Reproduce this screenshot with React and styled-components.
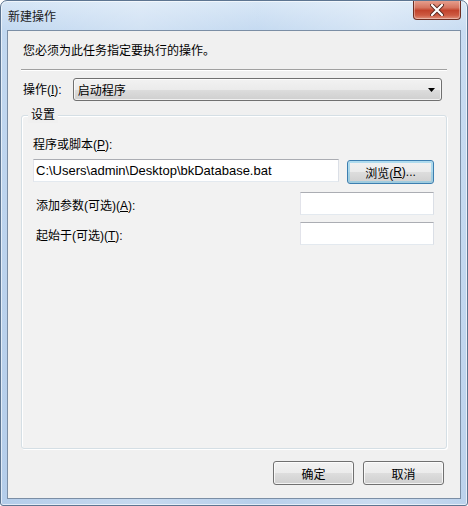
import React from "react";
import styled, { createGlobalStyle } from "styled-components";

const Global = createGlobalStyle`
    html, body {
        margin: 0;
        padding: 0;
        background: #fff;
    }
    body {
        font-family: "Noto Sans CJK SC", "Liberation Sans", sans-serif;
        font-size: 12px;
        color: #000;
    }
`;

const font = `"Liberation Sans", "Noto Sans CJK SC", sans-serif`;

export default function App() {
    return (
        <>
            <Global />
            <Window>
                <TitleBar>
                    <Title>新建操作</Title>
                    <CloseButton aria-label="关闭">
                        <svg width="14" height="12" viewBox="0 0 14 12">
                            <path d="M2 1 L12 11 M12 1 L2 11" stroke="#5a2a22" strokeWidth="4" strokeLinecap="round" />
                            <path d="M2 1 L12 11 M12 1 L2 11" stroke="#fff" strokeWidth="2.2" strokeLinecap="round" />
                        </svg>
                    </CloseButton>
                </TitleBar>
                <Client>
                    <Intro>您必须为此任务指定要执行的操作。</Intro>
                    <Separator />
                    <ActionRow>
                        <Label>操作(<u>I</u>):</Label>
                        <Combo>
                            <span>启动程序</span>
                            <svg width="7" height="4" viewBox="0 0 7 4">
                                <path d="M0 0 H7 L3.5 4 Z" fill="#000" />
                            </svg>
                        </Combo>
                    </ActionRow>
                    <Group>
                        <Legend>设置</Legend>
                        <GroupBody>
                            <Label>程序或脚本(<u>P</u>):</Label>
                            <ScriptRow>
                                <TextBox $width="306px">C:\Users\admin\Desktop\bkDatabase.bat</TextBox>
                                <Button $focused $width="87px">浏览(<u>R</u>)...</Button>
                            </ScriptRow>
                            <FieldRow>
                                <Label>添加参数(可选)(<u>A</u>):</Label>
                                <TextBox $width="134px" />
                            </FieldRow>
                            <FieldRow $gap="7px">
                                <Label>起始于(可选)(<u>T</u>):</Label>
                                <TextBox $width="134px" />
                            </FieldRow>
                        </GroupBody>
                    </Group>
                    <Footer>
                        <Button $width="81px">确定</Button>
                        <Button $width="81px">取消</Button>
                    </Footer>
                </Client>
            </Window>
        </>
    );
}

const Window = styled.div`
    width: 468px;
    height: 506px;
    box-sizing: border-box;
    display: flex;
    flex-direction: column;
    border: 1px solid #5d7591;
    border-radius: 7px 7px 3px 3px;
    background:
        linear-gradient(90deg, rgba(255,255,255,0.0) 0%, rgba(255,255,255,0.25) 30%, rgba(255,255,255,0.05) 55%, rgba(255,255,255,0.3) 80%, rgba(255,255,255,0.1) 100%),
        linear-gradient(180deg, #d6e6f6 0%, #c2d8f0 30px, #b4cdea 100%);
    box-shadow: inset 0 0 0 1px rgba(255,255,255,0.6);
    overflow: hidden;
`;

const TitleBar = styled.div`
    height: 29px;
    display: flex;
    align-items: flex-start;
    justify-content: space-between;
    padding: 0 6px 0 7px;
`;

const Title = styled.div`
    margin-top: 7px;
    font-size: 12px;
    line-height: 16px;
    color: #1b1b1b;
`;

const CloseButton = styled.div`
    width: 46px;
    height: 19px;
    margin-top: -1px;
    display: flex;
    align-items: center;
    justify-content: center;
    border: 1px solid #6e2e22;
    border-top: none;
    border-radius: 0 0 4px 4px;
    background: linear-gradient(180deg, #e8a493 0%, #d67560 40%, #c2432c 55%, #cd5a42 80%, #e0917c 100%);
    box-shadow: inset 0 0 0 1px rgba(255,255,255,0.35);
`;

const Client = styled.div`
    flex: 1;
    margin: 0 6px 6px 6px;
    border: 1px solid #7b8ea5;
    background: #f0f0f0;
    display: flex;
    flex-direction: column;
    padding: 12px 13px 13px 13px;
    font-family: ${font};
`;

const Intro = styled.div`
    padding-left: 2px;
    line-height: 16px;
`;

const Separator = styled.div`
    height: 0;
    margin: 10px 0 0 0;
    border-top: 1px solid #a0a0a0;
    border-bottom: 1px solid #fff;
`;

const Label = styled.div`
    line-height: 16px;
    white-space: nowrap;
    u {
        text-decoration: underline;
    }
`;

const ActionRow = styled.div`
    display: flex;
    align-items: center;
    gap: 11px;
    margin-top: 7px;
    padding-left: 2px;
    padding-right: 5px;
`;

const Combo = styled.div`
    flex: 1;
    height: 23px;
    box-sizing: border-box;
    display: flex;
    align-items: center;
    justify-content: space-between;
    padding: 0 6px 0 4px;
    border: 1px solid #707070;
    border-radius: 3px;
    background: linear-gradient(180deg, #f2f2f2 0%, #ebebeb 50%, #dddddd 51%, #cfcfcf 100%);
    box-shadow: inset 0 0 0 1px rgba(255,255,255,0.7);
`;

const Group = styled.div`
    position: relative;
    margin-top: 14px;
    flex: 1;
    border: 1px solid #d5dfe5;
    border-radius: 3px;
    box-shadow: inset 1px 1px 0 #fff, 1px 1px 0 #fff;
    background: #f2f2f2;
`;

const Legend = styled.div`
    position: absolute;
    top: -9px;
    left: 6px;
    padding: 0 3px;
    background: #f0f0f0;
    line-height: 16px;
`;

const GroupBody = styled.div`
    display: flex;
    flex-direction: column;
    padding: 21px 12px 0 11px;
`;

const ScriptRow = styled.div`
    display: flex;
    align-items: flex-start;
    gap: 8px;
    margin-top: 6px;
`;

const FieldRow = styled.div`
    display: flex;
    align-items: center;
    justify-content: space-between;
    padding-left: 3px;
    margin-top: ${p => p.$gap || "8px"};
    ${Label} {
        margin-top: 5px;
    }
`;

const TextBox = styled.div`
    width: ${p => p.$width};
    height: 23px;
    box-sizing: border-box;
    display: flex;
    align-items: center;
    padding: 0 2px;
    background: #fff;
    border: 1px solid #e3e9ef;
    border-top-color: #abadb3;
    border-left-color: #e2e3ea;
    border-right-color: #dbdfe6;
    white-space: nowrap;
    font-size: 13px;
    font-family: ${font};
`;

const Button = styled.div`
    width: ${p => p.$width};
    height: 24px;
    box-sizing: border-box;
    display: flex;
    align-items: center;
    justify-content: center;
    margin-top: 1px;
    border: 1px solid ${p => (p.$focused ? "#3c7fb1" : "#707070")};
    border-radius: 3px;
    background: linear-gradient(180deg, #f2f2f2 0%, #ebebeb 50%, #dddddd 51%, #cfcfcf 100%);
    box-shadow: inset 0 0 0 ${p => (p.$focused ? "2px rgba(120,200,235,0.55)" : "1px rgba(255,255,255,0.75)")};
    u {
        text-decoration: underline;
    }
`;

const Footer = styled.div`
    display: flex;
    justify-content: flex-end;
    gap: 9px;
    padding-right: 3px;
    margin-top: 11px;
`;
